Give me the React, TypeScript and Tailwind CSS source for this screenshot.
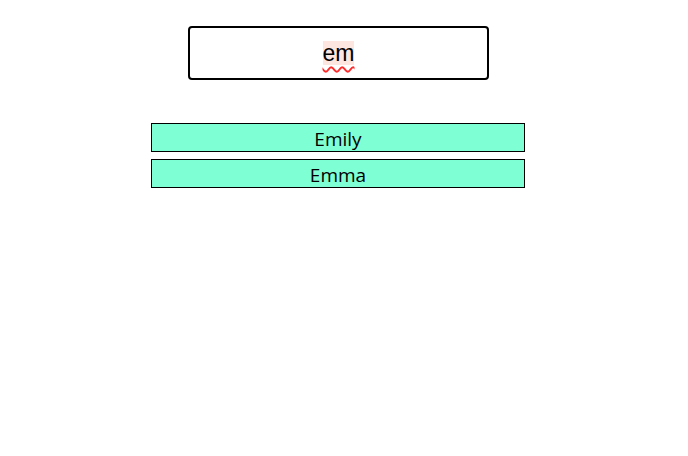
export default function App() {
  const names = ["Emily", "Emma"];
  return (
    <div className="w-[688px] h-[456px] bg-white">
      <div className="w-[677px] flex flex-col items-center pt-[26px]">
        <div className="w-[301px] h-[54px] border-2 border-black rounded-[4px] flex items-center justify-center bg-white">
          <span
            className="bg-[#fde6e0] text-black text-[23px] leading-[24px] underline decoration-wavy decoration-[#ff2a2a] underline-offset-[5px] decoration-[1.5px]"
            style={{ fontFamily: '"Liberation Sans", Arial, sans-serif' }}
          >
            em
          </span>
        </div>
        <div className="mt-[43px] flex flex-col gap-[7px] pr-[1px]">
          {names.map((n) => (
            <div
              key={n}
              className="w-[374px] h-[29px] border border-black bg-[#7fffd4] flex items-center justify-center pt-[3px] text-[19px] leading-[24px] text-black"
              style={{ fontFamily: '"Open Sans", "Noto Sans", sans-serif' }}
            >
              {n}
            </div>
          ))}
        </div>
      </div>
    </div>
  );
}
